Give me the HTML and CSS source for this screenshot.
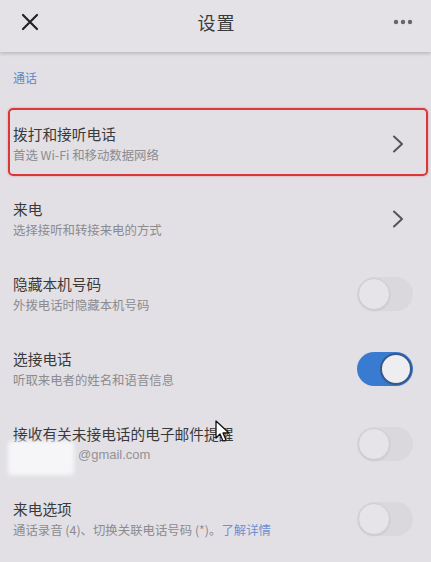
FILE: index.html
```html
<!DOCTYPE html>
<html lang="zh-CN">
<head>
<meta charset="utf-8">
<title>设置</title>
<link rel="stylesheet" href="styles.css">
</head>
<body>
<div class="screen">
  <header class="topbar">
    <span class="icon-btn">
      <svg width="18" height="18" viewBox="0 0 18 18"><path d="M2 2 L16 16 M16 2 L2 16" stroke="#222" stroke-width="2.2" stroke-linecap="round" fill="none"/></svg>
    </span>
    <h1 class="title">设置</h1>
    <span class="icon-btn">
      <svg width="20" height="6" viewBox="0 0 20 6"><circle cx="3" cy="3" r="2.2" fill="#666"/><circle cx="10" cy="3" r="2.2" fill="#666"/><circle cx="17" cy="3" r="2.2" fill="#666"/></svg>
    </span>
  </header>
  <main class="content">
    <div class="section-label">通话</div>
    <div class="row highlighted">
      <div class="texts">
        <div class="row-title">拨打和接听电话</div>
        <div class="row-sub">首选 Wi-Fi 和移动数据网络</div>
      </div>
      <svg class="chev" width="12" height="18" viewBox="0 0 12 18"><path d="M2 1.5 L10 9 L2 16.5" stroke="#555" stroke-width="2" fill="none" stroke-linecap="round" stroke-linejoin="round"/></svg>
    </div>
    <div class="row">
      <div class="texts">
        <div class="row-title">来电</div>
        <div class="row-sub">选择接听和转接来电的方式</div>
      </div>
      <svg class="chev" width="12" height="18" viewBox="0 0 12 18"><path d="M2 1.5 L10 9 L2 16.5" stroke="#555" stroke-width="2" fill="none" stroke-linecap="round" stroke-linejoin="round"/></svg>
    </div>
    <div class="row">
      <div class="texts">
        <div class="row-title">隐藏本机号码</div>
        <div class="row-sub">外拨电话时隐藏本机号码</div>
      </div>
      <span class="toggle"><span class="knob"></span></span>
    </div>
    <div class="row">
      <div class="texts">
        <div class="row-title">选接电话</div>
        <div class="row-sub">听取来电者的姓名和语音信息</div>
      </div>
      <span class="toggle on"><span class="knob"></span></span>
    </div>
    <div class="row">
      <div class="texts">
        <div class="row-title">接收有关未接电话的电子邮件提醒</div>
        <div class="row-sub email"><span class="blur"></span>@gmail.com</div>
      </div>
      <span class="toggle"><span class="knob"></span></span>
    </div>
    <div class="row">
      <div class="texts">
        <div class="row-title">来电选项</div>
        <div class="row-sub">通话录音 (4)、切换关联电话号码 (*)。<span class="link">了解详情</span></div>
      </div>
      <span class="toggle"><span class="knob"></span></span>
    </div>
  </main>
  <svg class="cursor" width="16" height="24" viewBox="0 0 16 24"><path d="M1 1 L1 18 L5 14 L8 21 L11 20 L8 13 L14 13 Z" fill="#fff" stroke="#111" stroke-width="1.3" stroke-linejoin="round"/></svg>
</div>
</body>
</html>
```
FILE: styles.css
```css
* { box-sizing: border-box; }
html, body { margin: 0; padding: 0; }
body {
  background: #e2e0e5;
  font-family: "Noto Sans CJK SC", "Noto Sans", sans-serif;
  color: #333;
}
.screen {
  position: relative;
  width: 431px;
  height: 562px;
  overflow: hidden;
  background: #e2e0e5;
}
.topbar {
  height: 52px;
  display: flex;
  align-items: center;
  justify-content: space-between;
  padding: 0 16px 8px 18px;
  background: #e4e2e7;
  box-shadow: 0 2px 3px rgba(0,0,0,0.16);
  position: relative;
  z-index: 1;
}
.icon-btn { display: flex; align-items: center; width: 24px; justify-content: center; }
.title {
  margin: 0;
  font-size: 18px;
  font-weight: 400;
  color: #3a3a3a;
  letter-spacing: 1px;
}
.content { display: flex; flex-direction: column; }
.section-label {
  padding: 18px 13px 20px;
  font-size: 12px;
  line-height: 16px;
  color: #5b86c9;
}
.row {
  position: relative;
  height: 75px;
  display: flex;
  align-items: center;
  justify-content: space-between;
  padding: 0 18px 0 13px;
}
.row.highlighted::after {
  content: "";
  position: absolute;
  top: 2px;
  left: 8px;
  right: 3px;
  bottom: 5px;
  border: 2px solid #d8383a;
  border-radius: 5px;
  box-shadow: 0 0 2px rgba(216,56,58,0.5);
}
.texts { display: flex; flex-direction: column; gap: 4px; }
.row-title { font-size: 14.7px; line-height: 18px; color: #3a3a3c; }
.row-sub { font-size: 12.4px; line-height: 16px; color: #8c8b8f; }
.row-sub.email { display: flex; align-items: center; font-family: "Liberation Sans", "Noto Sans", sans-serif; font-size: 13px; color: #939296; }
.blur {
  width: 66px;
  height: 34px;
  margin: -6px 4px -12px -5px;
  align-self: flex-start;
  background: #f6f6f8;
  border-radius: 4px;
  filter: blur(2px);
}
.link { color: #6f90d2; }
.chev { margin-right: 9px; }
.toggle {
  position: relative;
  flex: none;
  width: 56px;
  height: 34px;
  border-radius: 17px;
  background: #dad8dc;
  display: flex;
  align-items: center;
  padding: 1px;
}
.toggle .knob {
  width: 32px;
  height: 32px;
  border-radius: 50%;
  background: #e6e4e8;
  border: 1px solid #cfcdd2;
  box-shadow: 0 1px 2px rgba(0,0,0,0.08);
}
.toggle.on {
  background: #3a7bd2;
  justify-content: flex-end;
}
.toggle.on .knob {
  background: #eeedf1;
  border: 2px solid #355a88;
}
.cursor {
  position: absolute;
  left: 215px;
  top: 420px;
}
```
